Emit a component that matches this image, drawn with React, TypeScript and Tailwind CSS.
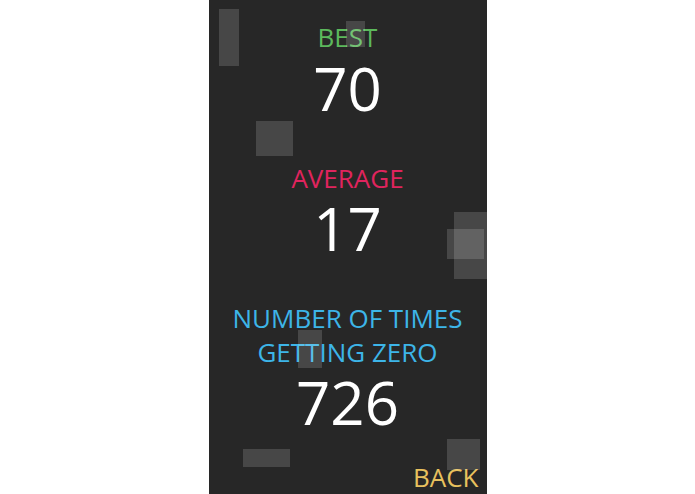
const squares = [
  { x: 10, y: 9, w: 20, h: 57 },
  { x: 137, y: 21, w: 19, h: 26 },
  { x: 47, y: 121, w: 37, h: 35 },
  { x: 245, y: 212, w: 33, h: 67 },
  { x: 238, y: 229, w: 37, h: 30 },
  { x: 89, y: 330, w: 24, h: 38 },
  { x: 34, y: 449, w: 47, h: 18 },
  { x: 238, y: 439, w: 33, h: 31 },
]

export default function App() {
  return (
    <div className="min-h-[494px] bg-white flex justify-center" style={{ fontFamily: '"Open Sans", "Noto Sans", sans-serif' }}>
      <div className="relative w-[278px] h-[494px] bg-[#272727] overflow-hidden flex flex-col items-center pt-[24px]">
        <div className="text-[26px] leading-[26px] text-[#5cb85c]">BEST</div>
        <div className="mt-[8px] text-[60px] leading-[60px] text-white">70</div>

        <div className="mt-[47px] text-[26px] leading-[26px] text-[#e0245e]">AVERAGE</div>
        <div className="mt-[7px] text-[60px] leading-[60px] text-white">17</div>

        <div className="mt-[43px] text-[26px] leading-[34px] text-[#3db5e8] text-center">
          NUMBER OF TIMES
          <br />
          GETTING ZERO
        </div>
        <div className="mt-[3px] text-[60px] leading-[60px] text-white">726</div>

        <div className="mt-auto self-end pr-[8px] pb-[4px] text-[26px] leading-[26px] text-[#e8c15e]">BACK</div>

        {squares.map((s, i) => (
          <div
            key={i}
            className="absolute bg-white/15 pointer-events-none"
            style={{ left: s.x, top: s.y, width: s.w, height: s.h }}
          />
        ))}
      </div>
    </div>
  )
}
